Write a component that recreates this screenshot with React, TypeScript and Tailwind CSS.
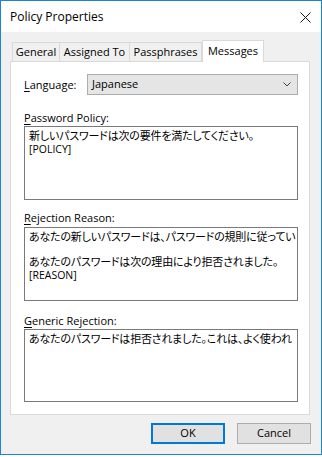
import React from "react";

const ui = "font-['Segoe_UI','Open_Sans','Noto_Sans_CJK_JP',sans-serif]";
const jp =
  "font-['Noto_Sans_CJK_JP',sans-serif] [font-feature-settings:'palt'] text-[11px] leading-[12.5px] tracking-[-0.2px]";

function Box({ lines, h }: { lines: string[]; h: string }) {
  return (
    <div
      className={`w-[274px] ${h} border border-[#7a7a7a] bg-white pl-[4px] pt-[2px] overflow-hidden whitespace-pre text-black ${jp}`}
    >
      {lines.map((l, i) => (
        <div key={i} className="h-[12.5px]">
          {l.startsWith("[") ? (
            <span className="font-['Segoe_UI','Open_Sans',sans-serif] text-[10.5px] tracking-normal">{l}</span>
          ) : (
            l
          )}
        </div>
      ))}
    </div>
  );
}

function Label({ k, rest, className = "" }: { k: string; rest: string; className?: string }) {
  return (
    <div className={`h-[13px] leading-[13px] text-[11px] text-black ${className}`}>
      <span className="underline underline-offset-[2px] decoration-[1px]">{k}</span>
      {rest}
    </div>
  );
}

export default function App() {
  return (
    <div className={`w-[322px] h-[457px] bg-white ${ui}`}>
      <div className="w-[322px] h-[455px] border border-[#1a86d8] bg-[#f0f0f0] flex flex-col">
        {/* Title bar */}
        <div className="h-[31px] bg-white flex items-center justify-between pl-[9px] pr-[10px]">
          <span className="text-[12px] text-black">Policy Properties</span>
          <svg width="11" height="11" viewBox="0 0 11 11" className="mt-[1px]">
            <path d="M0.5 0.5 L10.5 10.5 M10.5 0.5 L0.5 10.5" stroke="#111" strokeWidth="1" />
          </svg>
        </div>
        {/* Body */}
        <div className="flex flex-col pl-[9px] pt-[8px]">
          {/* Tabs */}
          <div className="flex items-end h-[21px] pl-[2px] text-[11px] text-black relative z-10">
            <div className="w-[48px] h-[19px] border border-[#d9d9d9] border-b-0 bg-[#f0f0f0] flex items-center justify-center">
              General
            </div>
            <div className="w-[70px] h-[19px] border border-[#d9d9d9] border-b-0 border-l-0 bg-[#f0f0f0] flex items-center justify-center">
              Assigned To
            </div>
            <div className="w-[72px] h-[19px] border border-[#d9d9d9] border-b-0 border-l-0 bg-[#f0f0f0] flex items-center justify-center">
              Passphrases
            </div>
            <div className="w-[62px] h-[22px] -mb-[1px] border border-[#d9d9d9] border-b-0 bg-white flex items-start justify-center pt-[2px]">
              Messages
            </div>
          </div>
          {/* Panel */}
          <div className="w-[300px] h-[354px] border border-[#d9d9d9] bg-white pl-[13px] flex flex-col">
            <div className="flex items-center mt-[12px] h-[21px]">
              <Label k="L" rest="anguage:" className="w-[63px]" />
              <div className="w-[211px] h-[21px] border border-[#acacac] bg-[#e5e5e5] flex items-center justify-between pl-[4px] pr-[6px] text-[11px] text-black">
                <span>Japanese</span>
                <svg width="8" height="5" viewBox="0 0 8 5">
                  <path d="M0.5 0.5 L4 4 L7.5 0.5" stroke="#444" strokeWidth="1" fill="none" />
                </svg>
              </div>
            </div>
            <Label k="P" rest="assword Policy:" className="mt-[16px]" />
            <div className="mt-[2px]">
              <Box
                h="h-[74px]"
                lines={["新しいパスワードは次の要件を満たしてください。", "[POLICY]"]}
              />
            </div>
            <Label k="R" rest="ejection Reason:" className="mt-[11px]" />
            <div className="mt-[3px]">
              <Box
                h="h-[74px]"
                lines={[
                  "あなたの新しいパスワードは、パスワードの規則に従ってい",
                  "",
                  "あなたのパスワードは次の理由により拒否されました。",
                  "[REASON]",
                ]}
              />
            </div>
            <Label k="G" rest="eneric Rejection:" className="mt-[13px]" />
            <div className="mt-[2px]">
              <Box
                h="h-[73px]"
                lines={["あなたのパスワードは拒否されました。これは、よく使われ"]}
              />
            </div>
          </div>
          {/* Buttons */}
          <div className="flex justify-end gap-[12px] mt-[8px] pr-[10px] text-[11px] text-black">
            <div className="w-[74px] h-[21px] border-2 border-[#0078d7] bg-[#e1e1e1] flex items-center justify-center">
              OK
            </div>
            <div className="w-[74px] h-[21px] border border-[#adadad] bg-[#e1e1e1] flex items-center justify-center">
              Cancel
            </div>
          </div>
        </div>
      </div>
    </div>
  );
}
